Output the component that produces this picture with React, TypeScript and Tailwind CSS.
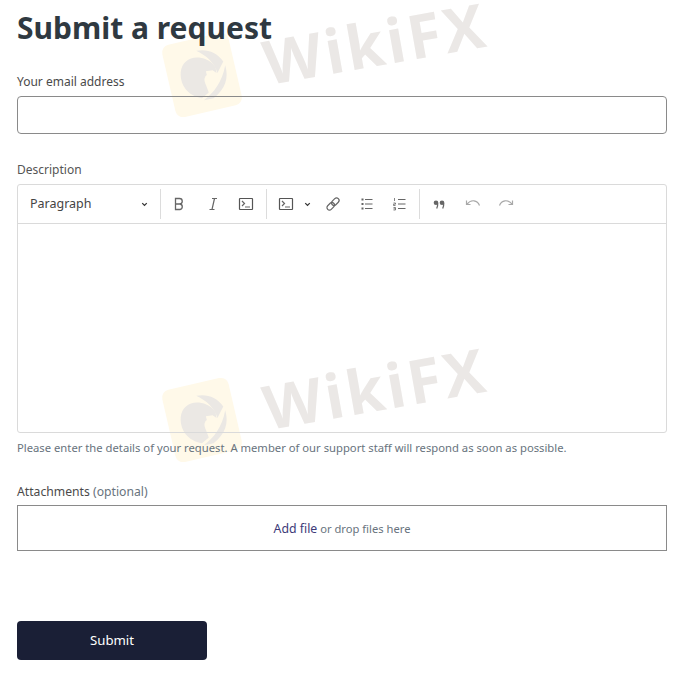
const font = "[font-family:'Noto_Sans','Open_Sans',sans-serif]";

const Watermark = ({ className }: { className: string }) => (
  <div className={`pointer-events-none absolute flex h-[130px] w-[340px] items-center ${className}`}>
    <div className="flex h-[74px] w-[68px] shrink-0 rotate-[-13deg] items-center justify-center rounded-lg bg-[#fff9e9]">
      <svg viewBox="0 0 60 60" className="h-[58px] w-[58px] rotate-[13deg]" fill="#ebe8e4">
        <path d="M24 5c11-2 21 1 28 11l-6 12c-3-10-11-18-22-23z" />
        <path d="M54 20c4 13 0 25-12 34l-10 2c10-7 19-19 22-36z" />
        <path d="M8 27C9 17 17 11 27 12c7 1 13 4 17 10l1 6-4-3-7 1 1 4c-3 2-3 6-1 10l3 8-7 6C16 52 7 41 8 27z" />
      </svg>
    </div>
    <span className="ml-[26px] -translate-y-[33px] rotate-[-10deg] text-[61px] font-bold leading-none tracking-[3px] text-[#ebe8e6] [font-family:'Open_Sans',sans-serif]">
      WikiFX
    </span>
  </div>
);

const Divider = () => <div className="mx-[5px] h-[30px] w-px bg-[#dcdcdc]" />;

const Chevron = () => (
  <svg viewBox="0 0 10 10" className="h-[9px] w-[9px]" fill="none" stroke="#333" strokeWidth="1.4">
    <path d="M2.500 3.500 5 6 7.500 3.500" />
  </svg>
);

const ToolIcon = ({ children, dim }: { children: React.ReactNode; dim?: boolean }) => (
  <svg
    viewBox="0 0 20 20"
    className="h-[20px] w-[20px]"
    fill="none"
    stroke={dim ? "#a8a8a8" : "#666"}
    strokeWidth="1.2"
  >
    {children}
  </svg>
);

const CodeBlock = () => (
  <>
    <rect x="3.500" y="4.500" width="13" height="11" rx="0.500" stroke="#555" />
    <path d="M6 7l2.500 2.500L6 12M9 13h5" />
  </>
);

export default function App() {
  return (
    <div className={`relative h-[698px] w-[683px] overflow-hidden bg-white pl-[17px] pr-[16px] text-[#2f3941] ${font}`}>
      <Watermark className="left-[168px] top-[10px]" />
      <Watermark className="left-[168px] top-[355px]" />

      <div className="relative">
        <h1 className="pt-[6px] text-[30px] font-bold leading-[44px] text-[#2f3941]">Submit a request</h1>

        <label className="mt-[22px] block text-[12px] leading-[20px] text-[#4a4a4a]">Your email address</label>
        <div className="mt-[4px] h-[38px] rounded-[4px] border border-[#8a8a8a]" />

        <label className="mt-[26px] block text-[12px] leading-[20px] text-[#555]">Description</label>
        <div className="mt-[4px] h-[249px] rounded-[3px] border border-[#dadada]">
          <div className="flex h-[39px] items-center border-b border-[#dadada]">
            <div className="flex w-[137px] items-center justify-between pl-[12px] pr-[6px] text-[12.500px] text-[#444]">
              <span>Paragraph</span>
              <Chevron />
            </div>
            <Divider />
            <div className="ml-[3px] flex items-center gap-[13.500px]">
              <ToolIcon>
                <path d="M6.500 4.500h4a2.700 2.700 0 0 1 0 5.500h-4zM6.500 10h4.500a2.800 2.800 0 0 1 0 5.500H6.500z" strokeWidth="1.300" />
              </ToolIcon>
              <ToolIcon>
                <path d="M9 4.500h5M6.500 15.500h5M11.500 4.500 9 15.500" />
              </ToolIcon>
              <ToolIcon>
                <CodeBlock />
              </ToolIcon>
            </div>
            <div className="ml-[5px]">
              <Divider />
            </div>
            <div className="ml-[4px] flex items-center gap-[7px]">
              <ToolIcon>
                <CodeBlock />
              </ToolIcon>
              <Chevron />
            </div>
            <div className="ml-[11px] flex items-center gap-[13.500px]">
              <ToolIcon>
                <g transform="rotate(-45 10 10)">
                  <rect x="2.500" y="7.500" width="8.500" height="5" rx="2.500" />
                  <rect x="9" y="7.500" width="8.500" height="5" rx="2.500" />
                </g>
              </ToolIcon>
              <ToolIcon>
                <path d="M8 5.500h7.500M8 10h7.500M8 14.500h7.500" strokeWidth="1.200" />
                <path d="M4.500 5.500h2M4.500 10h2M4.500 14.500h2" strokeWidth="2" />
              </ToolIcon>
              <ToolIcon>
                <path d="M8 5.500h7.500M8 10h7.500M8 14.500h7.500" strokeWidth="1.200" />
                <path d="M4.500 4v3M3.500 9h2v1.200h-2v1.300h2M3.500 13.500h2v2.500h-2M3.500 14.800h2" strokeWidth="0.800" />
              </ToolIcon>
            </div>
            <div className="ml-[4px]">
              <Divider />
            </div>
            <div className="ml-[4px] flex items-center gap-[13.500px]">
              <ToolIcon>
                <circle cx="7" cy="8.800" r="2.300" fill="#666" stroke="none" />
                <circle cx="13" cy="8.800" r="2.300" fill="#666" stroke="none" />
                <path d="M8.700 9c.1 2.300-.2 4-1 5.500M14.700 9c.1 2.300-.2 4-1 5.500" strokeWidth="1.300" />
              </ToolIcon>
              <ToolIcon dim>
                <path d="M3.500 6.500v4h4M3.800 10.300C6 7.500 8.500 6.500 11 6.800c2.500.3 4.500 2 5.500 4.700" />
              </ToolIcon>
              <ToolIcon dim>
                <path d="M16.500 6.500v4h-4M16.200 10.300C14 7.500 11.500 6.500 9 6.800c-2.500.3-4.500 2-5.500 4.700" />
              </ToolIcon>
            </div>
          </div>
        </div>
        <p className="mt-[6px] text-[11.250px] leading-[18px] text-[#68737d]">
          Please enter the details of your request. A member of our support staff will respond as soon as possible.
        </p>

        <label className="mt-[25px] block text-[12.200px] leading-[20px] text-[#4a4a4a]">
          Attachments <span className="text-[#68737d]">(optional)</span>
        </label>
        <div className="mt-[3px] flex h-[46px] items-center justify-center border border-[#8a8a8a] pt-[2px] text-[11.200px] text-[#68737d]">
          <span>
            <span className="text-[12.300px] text-[#3d3a78]">Add file</span> or drop files here
          </span>
        </div>

        <button className="mt-[70px] block h-[39px] w-[190px] rounded-[4px] bg-[#1a1f36] text-[13.200px] text-white">
          Submit
        </button>
      </div>
    </div>
  );
}
